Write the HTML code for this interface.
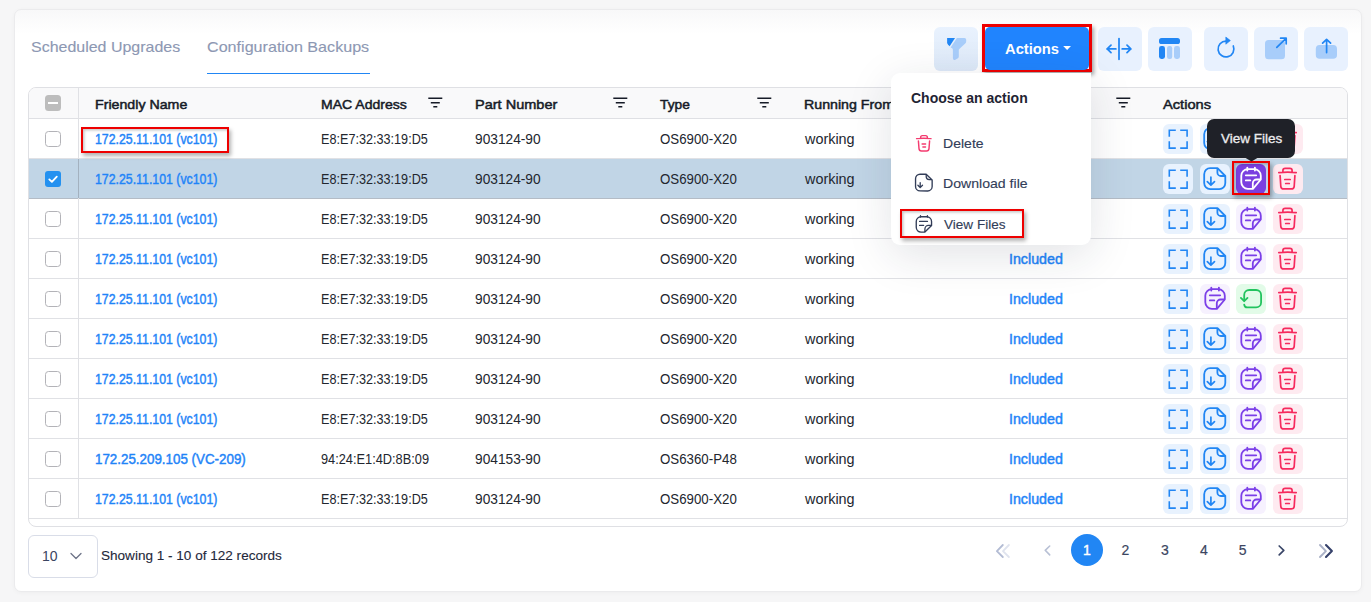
<!DOCTYPE html>
<html><head><meta charset="utf-8"><style>
html,body{margin:0;padding:0;}
body{width:1371px;height:602px;overflow:hidden;background:#f6f6f7;position:relative;font-family:"Liberation Sans", sans-serif;}
.t{position:absolute;white-space:nowrap;}
.b{position:absolute;}
svg.b{overflow:visible;}
</style></head><body>
<div class="b" style="left:14.0px;top:9.0px;width:1348.0px;height:583.0px;background:linear-gradient(#f8f8f9,#fff 24px);border:1px solid #ebebed;border-radius:7px;box-sizing:border-box;box-shadow:0 1px 4px rgba(0,0,0,.035)"></div>
<div class="t" style="left:31.2px;top:39.30px;font-size:15px;line-height:15px;font-weight:400;color:#8d98b3;letter-spacing:0px;transform:scaleX(1.0649);transform-origin:0 0;-webkit-text-stroke:0.12px #8d98b3;">Scheduled Upgrades</div>
<div class="t" style="left:207.2px;top:39.30px;font-size:15px;line-height:15px;font-weight:400;color:#8d98b3;letter-spacing:0px;transform:scaleX(1.0746);transform-origin:0 0;-webkit-text-stroke:0.12px #8d98b3;">Configuration Backups</div>
<div class="b" style="left:207.0px;top:72.6px;width:163.0px;height:1.5px;background:#2186f4"></div>
<div class="b" style="left:934.0px;top:27.0px;width:44.0px;height:44.0px;background:#e8f1fe;border-radius:6px;background:linear-gradient(#e9f2fe,#dde9f8)"></div>
<svg class="b" style="left:934.0px;top:27.0px" width="44" height="44" viewBox="0 0 44 44" fill="none"><path d="M13.1 11H21L15.6 19.3L13.9 17.4Q13.1 16.5 13.1 15.4Z" fill="#2186f4"/><path d="M22.9 11H30.5Q32.2 11 32.2 12.8V14.3Q32.2 15.6 31.2 16.6L24.8 22.6V29.6Q24.8 30.6 23.9 31.2L21.8 32.5Q18.9 34 18.9 31V22.8Q18.9 22 18.2 21.3L16.6 20.4Z" fill="#a8cdfa"/></svg>
<div class="b" style="left:982.0px;top:24.0px;width:110.0px;height:48.0px;border:3px solid #ee0000;box-sizing:border-box;box-shadow:2px 3px 4px rgba(0,0,0,.35)"></div>
<div class="b" style="left:985.0px;top:27.0px;width:104.0px;height:43.0px;background:#2084fe;border-radius:5px"></div>
<div class="t" style="left:1005.4px;top:41.30px;font-size:15px;line-height:15px;font-weight:700;color:#fff;letter-spacing:0px;transform:scaleX(0.9815);transform-origin:0 0;">Actions</div>
<svg class="b" style="left:1062.0px;top:44.0px" width="12" height="8" viewBox="0 0 12 8" fill="none"><path d="M1.2 2H9L5.1 6Z" fill="#fff"/></svg>
<div class="b" style="left:1098.0px;top:27.0px;width:44.0px;height:44.0px;background:#e8f1fe;border-radius:6px;"></div>
<svg class="b" style="left:1098.0px;top:27.0px" width="44" height="44" viewBox="0 0 44 44" fill="none"><path d="M21 11.5V32.3M9 21.9H17.9M24.2 21.9H32.9M13 18.2L9.2 21.9L13 25.6M29 18.2L32.8 21.9L29 25.6" stroke="#2186f4" stroke-width="1.75" stroke-linecap="round" stroke-linejoin="round"/></svg>
<div class="b" style="left:1148.0px;top:27.0px;width:44.0px;height:44.0px;background:#e8f1fe;border-radius:6px;"></div>
<svg class="b" style="left:1148.0px;top:27.0px" width="44" height="44" viewBox="0 0 44 44" fill="none"><rect x="11" y="11" width="21" height="6" rx="2.6" fill="#2186f4"/><rect x="11" y="19" width="6" height="13" rx="2.4" fill="#2186f4"/><rect x="19" y="19" width="5.2" height="13" rx="2.2" fill="#a8cdfa"/><rect x="26" y="19" width="6" height="13" rx="2.4" fill="#a8cdfa"/></svg>
<div class="b" style="left:1204.0px;top:27.0px;width:44.0px;height:44.0px;background:#e8f1fe;border-radius:6px;"></div>
<svg class="b" style="left:1204.0px;top:27.0px" width="44" height="44" viewBox="0 0 44 44" fill="none"><path d="M22 14.1A7.9 7.9 0 1 0 29.3 19" stroke="#2186f4" stroke-width="1.7" stroke-linecap="round"/><path d="M21.8 10L26.4 13.6L21.8 17.2Z" fill="#2186f4" stroke="#2186f4" stroke-width=".6" stroke-linejoin="round"/></svg>
<div class="b" style="left:1254.0px;top:27.0px;width:44.0px;height:44.0px;background:#e8f1fe;border-radius:6px;"></div>
<svg class="b" style="left:1254.0px;top:27.0px" width="44" height="44" viewBox="0 0 44 44" fill="none"><rect x="11" y="13" width="20" height="19.3" rx="3.5" fill="#a8cdfa"/><path d="M22.8 20.4L32 11.3M26.6 11.2H32.2V16.8" stroke="#2186f4" stroke-width="1.7" stroke-linecap="round" stroke-linejoin="round"/></svg>
<div class="b" style="left:1304.0px;top:27.0px;width:44.0px;height:44.0px;background:#e8f1fe;border-radius:6px;"></div>
<svg class="b" style="left:1304.0px;top:27.0px" width="44" height="44" viewBox="0 0 44 44" fill="none"><rect x="11.8" y="18" width="21.2" height="13.8" rx="3.8" fill="#a8cdfa"/><path d="M22.6 12.6V25.6M18.6 16.2L22.6 12.3L26.6 16.2" stroke="#2186f4" stroke-width="1.7" stroke-linecap="round" stroke-linejoin="round"/></svg>
<div class="b" style="left:28.0px;top:87.0px;width:1320.0px;height:440.0px;border:1px solid #dfe0e4;border-radius:8px;box-sizing:border-box"></div>
<div class="b" style="left:29.0px;top:88.0px;width:1318.0px;height:30.0px;background:#f9f9fa;border-radius:7px 7px 0 0"></div>
<div class="b" style="left:29.0px;top:118.0px;width:1318.0px;height:1.0px;background:#dfe0e4"></div>
<div class="b" style="left:29.0px;top:158.0px;width:1318.0px;height:1.0px;background:#e0e1e5"></div>
<div class="b" style="left:29.0px;top:159.0px;width:1318.0px;height:39.0px;background:#c1d5e6"></div>
<div class="b" style="left:29.0px;top:198.0px;width:1318.0px;height:1.0px;background:#b4bcc6"></div>
<div class="b" style="left:29.0px;top:238.0px;width:1318.0px;height:1.0px;background:#e0e1e5"></div>
<div class="b" style="left:29.0px;top:278.0px;width:1318.0px;height:1.0px;background:#e0e1e5"></div>
<div class="b" style="left:29.0px;top:318.0px;width:1318.0px;height:1.0px;background:#e0e1e5"></div>
<div class="b" style="left:29.0px;top:358.0px;width:1318.0px;height:1.0px;background:#e0e1e5"></div>
<div class="b" style="left:29.0px;top:398.0px;width:1318.0px;height:1.0px;background:#e0e1e5"></div>
<div class="b" style="left:29.0px;top:438.0px;width:1318.0px;height:1.0px;background:#e0e1e5"></div>
<div class="b" style="left:29.0px;top:478.0px;width:1318.0px;height:1.0px;background:#e0e1e5"></div>
<div class="b" style="left:29.0px;top:518.0px;width:1318.0px;height:1.0px;background:#e0e1e5"></div>
<div class="b" style="left:78.0px;top:88.0px;width:1.0px;height:430.0px;background:#e0e1e5"></div>
<div class="b" style="left:78.0px;top:159.0px;width:1.0px;height:39.0px;background:#a3b1bf"></div>
<div class="t" style="left:94.8px;top:97.57px;font-size:13.5px;line-height:13.5px;font-weight:400;color:#161b27;letter-spacing:0px;transform:scaleX(1.0515);transform-origin:0 0;-webkit-text-stroke:0.5px #161b27;">Friendly Name</div>
<div class="t" style="left:320.8px;top:97.57px;font-size:13.5px;line-height:13.5px;font-weight:400;color:#161b27;letter-spacing:0px;transform:scaleX(1.0396);transform-origin:0 0;-webkit-text-stroke:0.5px #161b27;">MAC Address</div>
<div class="t" style="left:474.6px;top:97.57px;font-size:13.5px;line-height:13.5px;font-weight:400;color:#161b27;letter-spacing:0px;transform:scaleX(1.0754);transform-origin:0 0;-webkit-text-stroke:0.5px #161b27;">Part Number</div>
<div class="t" style="left:660.2px;top:97.57px;font-size:13.5px;line-height:13.5px;font-weight:400;color:#161b27;letter-spacing:0px;transform:scaleX(1.0177);transform-origin:0 0;-webkit-text-stroke:0.5px #161b27;">Type</div>
<div class="t" style="left:804.3px;top:97.57px;font-size:13.5px;line-height:13.5px;font-weight:400;color:#161b27;letter-spacing:0px;transform:scaleX(1.0521);transform-origin:0 0;-webkit-text-stroke:0.5px #161b27;">Running From</div>
<div class="t" style="left:1162.9px;top:97.57px;font-size:13.5px;line-height:13.5px;font-weight:400;color:#161b27;letter-spacing:0px;transform:scaleX(1.0840);transform-origin:0 0;-webkit-text-stroke:0.5px #161b27;">Actions</div>
<svg class="b" style="left:428.0px;top:96.0px" width="15" height="12" viewBox="0 0 15 12" fill="none"><path d="M0.3 2.3H14.3M2.8 6.7H11.8M5.3 10.7H9.3" stroke="#161b27" stroke-width="1.55"/></svg>
<svg class="b" style="left:613.0px;top:96.0px" width="15" height="12" viewBox="0 0 15 12" fill="none"><path d="M0.3 2.3H14.3M2.8 6.7H11.8M5.3 10.7H9.3" stroke="#161b27" stroke-width="1.55"/></svg>
<svg class="b" style="left:757.0px;top:96.0px" width="15" height="12" viewBox="0 0 15 12" fill="none"><path d="M0.3 2.3H14.3M2.8 6.7H11.8M5.3 10.7H9.3" stroke="#161b27" stroke-width="1.55"/></svg>
<svg class="b" style="left:1116.0px;top:96.0px" width="15" height="12" viewBox="0 0 15 12" fill="none"><path d="M0.3 2.3H14.3M2.8 6.7H11.8M5.3 10.7H9.3" stroke="#161b27" stroke-width="1.55"/></svg>
<div class="b" style="left:45.0px;top:95.0px;width:16.0px;height:16.0px;background:#bdbdbd;border-radius:3.5px"></div>
<div class="b" style="left:48.0px;top:102.0px;width:10.0px;height:2.0px;background:#fff"></div>
<div class="b" style="left:45.0px;top:131.0px;width:16.0px;height:16.0px;border:1px solid #b3b3b8;border-radius:3.5px;box-sizing:border-box;background:#fff"></div>
<div class="t" style="left:95.3px;top:132.15px;font-size:14px;line-height:14px;font-weight:400;color:#1f84f8;letter-spacing:0px;transform:scaleX(0.8801);transform-origin:0 0;-webkit-text-stroke:0.45px #1f84f8;">172.25.11.101 (vc101)</div>
<div class="t" style="left:321.4px;top:132.15px;font-size:14px;line-height:14px;font-weight:400;color:#22262e;letter-spacing:0px;transform:scaleX(0.9027);transform-origin:0 0;">E8:E7:32:33:19:D5</div>
<div class="t" style="left:475.2px;top:132.15px;font-size:14px;line-height:14px;font-weight:400;color:#22262e;letter-spacing:0px;transform:scaleX(0.9798);transform-origin:0 0;">903124-90</div>
<div class="t" style="left:659.5px;top:132.15px;font-size:14px;line-height:14px;font-weight:400;color:#22262e;letter-spacing:0px;transform:scaleX(0.9487);transform-origin:0 0;">OS6900-X20</div>
<div class="t" style="left:804.6px;top:132.15px;font-size:14px;line-height:14px;font-weight:400;color:#22262e;letter-spacing:0px;transform:scaleX(1.0280);transform-origin:0 0;">working</div>
<div class="t" style="left:1009.1px;top:132.15px;font-size:14px;line-height:14px;font-weight:400;color:#1f84f8;letter-spacing:0px;transform:scaleX(1.0163);transform-origin:0 0;-webkit-text-stroke:0.45px #1f84f8;">Included</div>
<div class="b" style="left:1163.2px;top:124.0px;width:30.0px;height:30.0px;background:#e8f2fe;border-radius:6px"></div>
<svg class="b" style="left:1163.2px;top:124.0px" width="30" height="30" viewBox="0 0 30 30" fill="none"><path d="M6.3 12V6.3H12M18 6.3H24.1V12M24.1 18V24.1H18M12 24.1H6.3V18" stroke="#2186f4" stroke-width="1.6" stroke-linecap="square"/></svg>
<div class="b" style="left:1199.9px;top:124.0px;width:30.0px;height:30.0px;background:#e8f2fe;border-radius:6px"></div>
<svg class="b" style="left:1199.9px;top:124.0px" width="30" height="30" viewBox="0 0 30 30" fill="none"><path d="M17.5 4.2H10.2A6 6 0 0 0 4.2 10.2V19.1A6 6 0 0 0 10.2 25.1H19.3A6 6 0 0 0 25.3 19.1V12Z" stroke="#2186f4" stroke-width="1.8" stroke-linejoin="round"/><path d="M17.4 4.5V8.5A3.5 3.5 0 0 0 20.9 12H25" stroke="#2186f4" stroke-width="1.8"/><path d="M10.9 13.2V20.8M7.3 17.6L10.9 21.1L14.5 17.6" stroke="#2186f4" stroke-width="1.7" stroke-linecap="round" stroke-linejoin="round"/></svg>
<div class="b" style="left:1236.1px;top:124.0px;width:30.0px;height:30.0px;background:#f6f1fe;border-radius:6px"></div>
<svg class="b" style="left:1236.1px;top:124.0px" width="30" height="30" viewBox="0 0 30 30" fill="none"><path d="M16.9 24.8H11.9A6.6 6.6 0 0 1 5.3 18.2V11.7A6.6 6.6 0 0 1 11.9 5.1H18.2A6.6 6.6 0 0 1 24.8 11.7V15.5Z" stroke="#7b3fe8" stroke-width="1.8" stroke-linejoin="round"/><path d="M24.6 15.5H20.6A3.8 3.8 0 0 0 16.8 19.3V24.6" stroke="#7b3fe8" stroke-width="1.8"/><path d="M11.3 3.6V6.6M18.9 3.6V6.6M9.8 11.3H20.2M9.8 16.4H14.3" stroke="#7b3fe8" stroke-width="1.8" stroke-linecap="round"/></svg>
<div class="b" style="left:1273.1px;top:124.0px;width:30.0px;height:30.0px;background:#feeaf0;border-radius:6px"></div>
<svg class="b" style="left:1273.1px;top:124.0px" width="30" height="30" viewBox="0 0 30 30" fill="none"><path d="M5.8 8.6Q15 7.6 23.2 8.6M9.9 8.2V6.6Q9.9 4.3 12.2 4.3H16.9Q19.1 4.3 19.1 6.6V8.2M7.1 11.6L7.8 22.3Q8.1 24.9 10.6 24.9H18.4Q20.9 24.9 21.2 22.3L21.9 11.6M11.8 15.5H17.2M12.7 19.5H16.3" stroke="#f62a5e" stroke-width="1.7" stroke-linecap="round" stroke-linejoin="round"/></svg>
<div class="b" style="left:45.0px;top:171.0px;width:16.0px;height:16.0px;background:#2491f0;border-radius:3px"></div>
<svg class="b" style="left:45.0px;top:171.0px" width="16" height="16" viewBox="0 0 16 16" fill="none"><path d="M4.3 8.4L6.9 10.9L11.8 5.6" stroke="#fff" stroke-width="1.8" stroke-linecap="round" stroke-linejoin="round"/></svg>
<div class="t" style="left:95.3px;top:172.15px;font-size:14px;line-height:14px;font-weight:400;color:#1f84f8;letter-spacing:0px;transform:scaleX(0.8801);transform-origin:0 0;-webkit-text-stroke:0.45px #1f84f8;">172.25.11.101 (vc101)</div>
<div class="t" style="left:321.4px;top:172.15px;font-size:14px;line-height:14px;font-weight:400;color:#22262e;letter-spacing:0px;transform:scaleX(0.9027);transform-origin:0 0;">E8:E7:32:33:19:D5</div>
<div class="t" style="left:475.2px;top:172.15px;font-size:14px;line-height:14px;font-weight:400;color:#22262e;letter-spacing:0px;transform:scaleX(0.9798);transform-origin:0 0;">903124-90</div>
<div class="t" style="left:659.5px;top:172.15px;font-size:14px;line-height:14px;font-weight:400;color:#22262e;letter-spacing:0px;transform:scaleX(0.9487);transform-origin:0 0;">OS6900-X20</div>
<div class="t" style="left:804.6px;top:172.15px;font-size:14px;line-height:14px;font-weight:400;color:#22262e;letter-spacing:0px;transform:scaleX(1.0280);transform-origin:0 0;">working</div>
<div class="t" style="left:1009.1px;top:172.15px;font-size:14px;line-height:14px;font-weight:400;color:#1f84f8;letter-spacing:0px;transform:scaleX(1.0163);transform-origin:0 0;-webkit-text-stroke:0.45px #1f84f8;">Included</div>
<div class="b" style="left:1163.2px;top:164.0px;width:30.0px;height:30.0px;background:#e8f2fe;border-radius:6px"></div>
<svg class="b" style="left:1163.2px;top:164.0px" width="30" height="30" viewBox="0 0 30 30" fill="none"><path d="M6.3 12V6.3H12M18 6.3H24.1V12M24.1 18V24.1H18M12 24.1H6.3V18" stroke="#2186f4" stroke-width="1.6" stroke-linecap="square"/></svg>
<div class="b" style="left:1199.9px;top:164.0px;width:30.0px;height:30.0px;background:#e8f2fe;border-radius:6px"></div>
<svg class="b" style="left:1199.9px;top:164.0px" width="30" height="30" viewBox="0 0 30 30" fill="none"><path d="M17.5 4.2H10.2A6 6 0 0 0 4.2 10.2V19.1A6 6 0 0 0 10.2 25.1H19.3A6 6 0 0 0 25.3 19.1V12Z" stroke="#2186f4" stroke-width="1.8" stroke-linejoin="round"/><path d="M17.4 4.5V8.5A3.5 3.5 0 0 0 20.9 12H25" stroke="#2186f4" stroke-width="1.8"/><path d="M10.9 13.2V20.8M7.3 17.6L10.9 21.1L14.5 17.6" stroke="#2186f4" stroke-width="1.7" stroke-linecap="round" stroke-linejoin="round"/></svg>
<div class="b" style="left:1236.1px;top:164.0px;width:30.0px;height:30.0px;background:#7b3fe0;border-radius:6px"></div>
<svg class="b" style="left:1236.1px;top:164.0px" width="30" height="30" viewBox="0 0 30 30" fill="none"><path d="M16.9 24.8H11.9A6.6 6.6 0 0 1 5.3 18.2V11.7A6.6 6.6 0 0 1 11.9 5.1H18.2A6.6 6.6 0 0 1 24.8 11.7V15.5Z" stroke="#fff" stroke-width="1.8" stroke-linejoin="round"/><path d="M24.6 15.5H20.6A3.8 3.8 0 0 0 16.8 19.3V24.6" stroke="#fff" stroke-width="1.8"/><path d="M11.3 3.6V6.6M18.9 3.6V6.6M9.8 11.3H20.2M9.8 16.4H14.3" stroke="#fff" stroke-width="1.8" stroke-linecap="round"/></svg>
<div class="b" style="left:1273.1px;top:164.0px;width:30.0px;height:30.0px;background:#feeaf0;border-radius:6px"></div>
<svg class="b" style="left:1273.1px;top:164.0px" width="30" height="30" viewBox="0 0 30 30" fill="none"><path d="M5.8 8.6Q15 7.6 23.2 8.6M9.9 8.2V6.6Q9.9 4.3 12.2 4.3H16.9Q19.1 4.3 19.1 6.6V8.2M7.1 11.6L7.8 22.3Q8.1 24.9 10.6 24.9H18.4Q20.9 24.9 21.2 22.3L21.9 11.6M11.8 15.5H17.2M12.7 19.5H16.3" stroke="#f62a5e" stroke-width="1.7" stroke-linecap="round" stroke-linejoin="round"/></svg>
<div class="b" style="left:45.0px;top:211.0px;width:16.0px;height:16.0px;border:1px solid #b3b3b8;border-radius:3.5px;box-sizing:border-box;background:#fff"></div>
<div class="t" style="left:95.3px;top:212.15px;font-size:14px;line-height:14px;font-weight:400;color:#1f84f8;letter-spacing:0px;transform:scaleX(0.8801);transform-origin:0 0;-webkit-text-stroke:0.45px #1f84f8;">172.25.11.101 (vc101)</div>
<div class="t" style="left:321.4px;top:212.15px;font-size:14px;line-height:14px;font-weight:400;color:#22262e;letter-spacing:0px;transform:scaleX(0.9027);transform-origin:0 0;">E8:E7:32:33:19:D5</div>
<div class="t" style="left:475.2px;top:212.15px;font-size:14px;line-height:14px;font-weight:400;color:#22262e;letter-spacing:0px;transform:scaleX(0.9798);transform-origin:0 0;">903124-90</div>
<div class="t" style="left:659.5px;top:212.15px;font-size:14px;line-height:14px;font-weight:400;color:#22262e;letter-spacing:0px;transform:scaleX(0.9487);transform-origin:0 0;">OS6900-X20</div>
<div class="t" style="left:804.6px;top:212.15px;font-size:14px;line-height:14px;font-weight:400;color:#22262e;letter-spacing:0px;transform:scaleX(1.0280);transform-origin:0 0;">working</div>
<div class="t" style="left:1009.1px;top:212.15px;font-size:14px;line-height:14px;font-weight:400;color:#1f84f8;letter-spacing:0px;transform:scaleX(1.0163);transform-origin:0 0;-webkit-text-stroke:0.45px #1f84f8;">Included</div>
<div class="b" style="left:1163.2px;top:204.0px;width:30.0px;height:30.0px;background:#e8f2fe;border-radius:6px"></div>
<svg class="b" style="left:1163.2px;top:204.0px" width="30" height="30" viewBox="0 0 30 30" fill="none"><path d="M6.3 12V6.3H12M18 6.3H24.1V12M24.1 18V24.1H18M12 24.1H6.3V18" stroke="#2186f4" stroke-width="1.6" stroke-linecap="square"/></svg>
<div class="b" style="left:1199.9px;top:204.0px;width:30.0px;height:30.0px;background:#e8f2fe;border-radius:6px"></div>
<svg class="b" style="left:1199.9px;top:204.0px" width="30" height="30" viewBox="0 0 30 30" fill="none"><path d="M17.5 4.2H10.2A6 6 0 0 0 4.2 10.2V19.1A6 6 0 0 0 10.2 25.1H19.3A6 6 0 0 0 25.3 19.1V12Z" stroke="#2186f4" stroke-width="1.8" stroke-linejoin="round"/><path d="M17.4 4.5V8.5A3.5 3.5 0 0 0 20.9 12H25" stroke="#2186f4" stroke-width="1.8"/><path d="M10.9 13.2V20.8M7.3 17.6L10.9 21.1L14.5 17.6" stroke="#2186f4" stroke-width="1.7" stroke-linecap="round" stroke-linejoin="round"/></svg>
<div class="b" style="left:1236.1px;top:204.0px;width:30.0px;height:30.0px;background:#f6f1fe;border-radius:6px"></div>
<svg class="b" style="left:1236.1px;top:204.0px" width="30" height="30" viewBox="0 0 30 30" fill="none"><path d="M16.9 24.8H11.9A6.6 6.6 0 0 1 5.3 18.2V11.7A6.6 6.6 0 0 1 11.9 5.1H18.2A6.6 6.6 0 0 1 24.8 11.7V15.5Z" stroke="#7b3fe8" stroke-width="1.8" stroke-linejoin="round"/><path d="M24.6 15.5H20.6A3.8 3.8 0 0 0 16.8 19.3V24.6" stroke="#7b3fe8" stroke-width="1.8"/><path d="M11.3 3.6V6.6M18.9 3.6V6.6M9.8 11.3H20.2M9.8 16.4H14.3" stroke="#7b3fe8" stroke-width="1.8" stroke-linecap="round"/></svg>
<div class="b" style="left:1273.1px;top:204.0px;width:30.0px;height:30.0px;background:#feeaf0;border-radius:6px"></div>
<svg class="b" style="left:1273.1px;top:204.0px" width="30" height="30" viewBox="0 0 30 30" fill="none"><path d="M5.8 8.6Q15 7.6 23.2 8.6M9.9 8.2V6.6Q9.9 4.3 12.2 4.3H16.9Q19.1 4.3 19.1 6.6V8.2M7.1 11.6L7.8 22.3Q8.1 24.9 10.6 24.9H18.4Q20.9 24.9 21.2 22.3L21.9 11.6M11.8 15.5H17.2M12.7 19.5H16.3" stroke="#f62a5e" stroke-width="1.7" stroke-linecap="round" stroke-linejoin="round"/></svg>
<div class="b" style="left:45.0px;top:251.0px;width:16.0px;height:16.0px;border:1px solid #b3b3b8;border-radius:3.5px;box-sizing:border-box;background:#fff"></div>
<div class="t" style="left:95.3px;top:252.15px;font-size:14px;line-height:14px;font-weight:400;color:#1f84f8;letter-spacing:0px;transform:scaleX(0.8801);transform-origin:0 0;-webkit-text-stroke:0.45px #1f84f8;">172.25.11.101 (vc101)</div>
<div class="t" style="left:321.4px;top:252.15px;font-size:14px;line-height:14px;font-weight:400;color:#22262e;letter-spacing:0px;transform:scaleX(0.9027);transform-origin:0 0;">E8:E7:32:33:19:D5</div>
<div class="t" style="left:475.2px;top:252.15px;font-size:14px;line-height:14px;font-weight:400;color:#22262e;letter-spacing:0px;transform:scaleX(0.9798);transform-origin:0 0;">903124-90</div>
<div class="t" style="left:659.5px;top:252.15px;font-size:14px;line-height:14px;font-weight:400;color:#22262e;letter-spacing:0px;transform:scaleX(0.9487);transform-origin:0 0;">OS6900-X20</div>
<div class="t" style="left:804.6px;top:252.15px;font-size:14px;line-height:14px;font-weight:400;color:#22262e;letter-spacing:0px;transform:scaleX(1.0280);transform-origin:0 0;">working</div>
<div class="t" style="left:1009.1px;top:252.15px;font-size:14px;line-height:14px;font-weight:400;color:#1f84f8;letter-spacing:0px;transform:scaleX(1.0163);transform-origin:0 0;-webkit-text-stroke:0.45px #1f84f8;">Included</div>
<div class="b" style="left:1163.2px;top:244.0px;width:30.0px;height:30.0px;background:#e8f2fe;border-radius:6px"></div>
<svg class="b" style="left:1163.2px;top:244.0px" width="30" height="30" viewBox="0 0 30 30" fill="none"><path d="M6.3 12V6.3H12M18 6.3H24.1V12M24.1 18V24.1H18M12 24.1H6.3V18" stroke="#2186f4" stroke-width="1.6" stroke-linecap="square"/></svg>
<div class="b" style="left:1199.9px;top:244.0px;width:30.0px;height:30.0px;background:#e8f2fe;border-radius:6px"></div>
<svg class="b" style="left:1199.9px;top:244.0px" width="30" height="30" viewBox="0 0 30 30" fill="none"><path d="M17.5 4.2H10.2A6 6 0 0 0 4.2 10.2V19.1A6 6 0 0 0 10.2 25.1H19.3A6 6 0 0 0 25.3 19.1V12Z" stroke="#2186f4" stroke-width="1.8" stroke-linejoin="round"/><path d="M17.4 4.5V8.5A3.5 3.5 0 0 0 20.9 12H25" stroke="#2186f4" stroke-width="1.8"/><path d="M10.9 13.2V20.8M7.3 17.6L10.9 21.1L14.5 17.6" stroke="#2186f4" stroke-width="1.7" stroke-linecap="round" stroke-linejoin="round"/></svg>
<div class="b" style="left:1236.1px;top:244.0px;width:30.0px;height:30.0px;background:#f6f1fe;border-radius:6px"></div>
<svg class="b" style="left:1236.1px;top:244.0px" width="30" height="30" viewBox="0 0 30 30" fill="none"><path d="M16.9 24.8H11.9A6.6 6.6 0 0 1 5.3 18.2V11.7A6.6 6.6 0 0 1 11.9 5.1H18.2A6.6 6.6 0 0 1 24.8 11.7V15.5Z" stroke="#7b3fe8" stroke-width="1.8" stroke-linejoin="round"/><path d="M24.6 15.5H20.6A3.8 3.8 0 0 0 16.8 19.3V24.6" stroke="#7b3fe8" stroke-width="1.8"/><path d="M11.3 3.6V6.6M18.9 3.6V6.6M9.8 11.3H20.2M9.8 16.4H14.3" stroke="#7b3fe8" stroke-width="1.8" stroke-linecap="round"/></svg>
<div class="b" style="left:1273.1px;top:244.0px;width:30.0px;height:30.0px;background:#feeaf0;border-radius:6px"></div>
<svg class="b" style="left:1273.1px;top:244.0px" width="30" height="30" viewBox="0 0 30 30" fill="none"><path d="M5.8 8.6Q15 7.6 23.2 8.6M9.9 8.2V6.6Q9.9 4.3 12.2 4.3H16.9Q19.1 4.3 19.1 6.6V8.2M7.1 11.6L7.8 22.3Q8.1 24.9 10.6 24.9H18.4Q20.9 24.9 21.2 22.3L21.9 11.6M11.8 15.5H17.2M12.7 19.5H16.3" stroke="#f62a5e" stroke-width="1.7" stroke-linecap="round" stroke-linejoin="round"/></svg>
<div class="b" style="left:45.0px;top:291.0px;width:16.0px;height:16.0px;border:1px solid #b3b3b8;border-radius:3.5px;box-sizing:border-box;background:#fff"></div>
<div class="t" style="left:95.3px;top:292.15px;font-size:14px;line-height:14px;font-weight:400;color:#1f84f8;letter-spacing:0px;transform:scaleX(0.8801);transform-origin:0 0;-webkit-text-stroke:0.45px #1f84f8;">172.25.11.101 (vc101)</div>
<div class="t" style="left:321.4px;top:292.15px;font-size:14px;line-height:14px;font-weight:400;color:#22262e;letter-spacing:0px;transform:scaleX(0.9027);transform-origin:0 0;">E8:E7:32:33:19:D5</div>
<div class="t" style="left:475.2px;top:292.15px;font-size:14px;line-height:14px;font-weight:400;color:#22262e;letter-spacing:0px;transform:scaleX(0.9798);transform-origin:0 0;">903124-90</div>
<div class="t" style="left:659.5px;top:292.15px;font-size:14px;line-height:14px;font-weight:400;color:#22262e;letter-spacing:0px;transform:scaleX(0.9487);transform-origin:0 0;">OS6900-X20</div>
<div class="t" style="left:804.6px;top:292.15px;font-size:14px;line-height:14px;font-weight:400;color:#22262e;letter-spacing:0px;transform:scaleX(1.0280);transform-origin:0 0;">working</div>
<div class="t" style="left:1009.1px;top:292.15px;font-size:14px;line-height:14px;font-weight:400;color:#1f84f8;letter-spacing:0px;transform:scaleX(1.0163);transform-origin:0 0;-webkit-text-stroke:0.45px #1f84f8;">Included</div>
<div class="b" style="left:1163.2px;top:284.0px;width:30.0px;height:30.0px;background:#e8f2fe;border-radius:6px"></div>
<svg class="b" style="left:1163.2px;top:284.0px" width="30" height="30" viewBox="0 0 30 30" fill="none"><path d="M6.3 12V6.3H12M18 6.3H24.1V12M24.1 18V24.1H18M12 24.1H6.3V18" stroke="#2186f4" stroke-width="1.6" stroke-linecap="square"/></svg>
<div class="b" style="left:1199.9px;top:284.0px;width:30.0px;height:30.0px;background:#f6f1fe;border-radius:6px"></div>
<svg class="b" style="left:1199.9px;top:284.0px" width="30" height="30" viewBox="0 0 30 30" fill="none"><path d="M16.9 24.8H11.9A6.6 6.6 0 0 1 5.3 18.2V11.7A6.6 6.6 0 0 1 11.9 5.1H18.2A6.6 6.6 0 0 1 24.8 11.7V15.5Z" stroke="#7b3fe8" stroke-width="1.8" stroke-linejoin="round"/><path d="M24.6 15.5H20.6A3.8 3.8 0 0 0 16.8 19.3V24.6" stroke="#7b3fe8" stroke-width="1.8"/><path d="M11.3 3.6V6.6M18.9 3.6V6.6M9.8 11.3H20.2M9.8 16.4H14.3" stroke="#7b3fe8" stroke-width="1.8" stroke-linecap="round"/></svg>
<div class="b" style="left:1236.1px;top:284.0px;width:30.0px;height:30.0px;background:#e2fbe8;border-radius:6px"></div>
<svg class="b" style="left:1236.1px;top:284.0px" width="30" height="30" viewBox="0 0 30 30" fill="none"><path d="M8.2 20.6A3.3 3.3 0 0 0 11.9 23.4H20.1A5 5 0 0 0 25.1 18.4V11A5 5 0 0 0 20.1 6H13.2A5 5 0 0 0 8.2 11V16.6" stroke="#22c35e" stroke-width="1.8" stroke-linecap="round"/><path d="M4.9 13.9L8.2 17.2L11.5 13.9" stroke="#22c35e" stroke-width="1.8" stroke-linecap="round" stroke-linejoin="round"/></svg>
<div class="b" style="left:1273.1px;top:284.0px;width:30.0px;height:30.0px;background:#feeaf0;border-radius:6px"></div>
<svg class="b" style="left:1273.1px;top:284.0px" width="30" height="30" viewBox="0 0 30 30" fill="none"><path d="M5.8 8.6Q15 7.6 23.2 8.6M9.9 8.2V6.6Q9.9 4.3 12.2 4.3H16.9Q19.1 4.3 19.1 6.6V8.2M7.1 11.6L7.8 22.3Q8.1 24.9 10.6 24.9H18.4Q20.9 24.9 21.2 22.3L21.9 11.6M11.8 15.5H17.2M12.7 19.5H16.3" stroke="#f62a5e" stroke-width="1.7" stroke-linecap="round" stroke-linejoin="round"/></svg>
<div class="b" style="left:45.0px;top:331.0px;width:16.0px;height:16.0px;border:1px solid #b3b3b8;border-radius:3.5px;box-sizing:border-box;background:#fff"></div>
<div class="t" style="left:95.3px;top:332.15px;font-size:14px;line-height:14px;font-weight:400;color:#1f84f8;letter-spacing:0px;transform:scaleX(0.8801);transform-origin:0 0;-webkit-text-stroke:0.45px #1f84f8;">172.25.11.101 (vc101)</div>
<div class="t" style="left:321.4px;top:332.15px;font-size:14px;line-height:14px;font-weight:400;color:#22262e;letter-spacing:0px;transform:scaleX(0.9027);transform-origin:0 0;">E8:E7:32:33:19:D5</div>
<div class="t" style="left:475.2px;top:332.15px;font-size:14px;line-height:14px;font-weight:400;color:#22262e;letter-spacing:0px;transform:scaleX(0.9798);transform-origin:0 0;">903124-90</div>
<div class="t" style="left:659.5px;top:332.15px;font-size:14px;line-height:14px;font-weight:400;color:#22262e;letter-spacing:0px;transform:scaleX(0.9487);transform-origin:0 0;">OS6900-X20</div>
<div class="t" style="left:804.6px;top:332.15px;font-size:14px;line-height:14px;font-weight:400;color:#22262e;letter-spacing:0px;transform:scaleX(1.0280);transform-origin:0 0;">working</div>
<div class="t" style="left:1009.1px;top:332.15px;font-size:14px;line-height:14px;font-weight:400;color:#1f84f8;letter-spacing:0px;transform:scaleX(1.0163);transform-origin:0 0;-webkit-text-stroke:0.45px #1f84f8;">Included</div>
<div class="b" style="left:1163.2px;top:324.0px;width:30.0px;height:30.0px;background:#e8f2fe;border-radius:6px"></div>
<svg class="b" style="left:1163.2px;top:324.0px" width="30" height="30" viewBox="0 0 30 30" fill="none"><path d="M6.3 12V6.3H12M18 6.3H24.1V12M24.1 18V24.1H18M12 24.1H6.3V18" stroke="#2186f4" stroke-width="1.6" stroke-linecap="square"/></svg>
<div class="b" style="left:1199.9px;top:324.0px;width:30.0px;height:30.0px;background:#e8f2fe;border-radius:6px"></div>
<svg class="b" style="left:1199.9px;top:324.0px" width="30" height="30" viewBox="0 0 30 30" fill="none"><path d="M17.5 4.2H10.2A6 6 0 0 0 4.2 10.2V19.1A6 6 0 0 0 10.2 25.1H19.3A6 6 0 0 0 25.3 19.1V12Z" stroke="#2186f4" stroke-width="1.8" stroke-linejoin="round"/><path d="M17.4 4.5V8.5A3.5 3.5 0 0 0 20.9 12H25" stroke="#2186f4" stroke-width="1.8"/><path d="M10.9 13.2V20.8M7.3 17.6L10.9 21.1L14.5 17.6" stroke="#2186f4" stroke-width="1.7" stroke-linecap="round" stroke-linejoin="round"/></svg>
<div class="b" style="left:1236.1px;top:324.0px;width:30.0px;height:30.0px;background:#f6f1fe;border-radius:6px"></div>
<svg class="b" style="left:1236.1px;top:324.0px" width="30" height="30" viewBox="0 0 30 30" fill="none"><path d="M16.9 24.8H11.9A6.6 6.6 0 0 1 5.3 18.2V11.7A6.6 6.6 0 0 1 11.9 5.1H18.2A6.6 6.6 0 0 1 24.8 11.7V15.5Z" stroke="#7b3fe8" stroke-width="1.8" stroke-linejoin="round"/><path d="M24.6 15.5H20.6A3.8 3.8 0 0 0 16.8 19.3V24.6" stroke="#7b3fe8" stroke-width="1.8"/><path d="M11.3 3.6V6.6M18.9 3.6V6.6M9.8 11.3H20.2M9.8 16.4H14.3" stroke="#7b3fe8" stroke-width="1.8" stroke-linecap="round"/></svg>
<div class="b" style="left:1273.1px;top:324.0px;width:30.0px;height:30.0px;background:#feeaf0;border-radius:6px"></div>
<svg class="b" style="left:1273.1px;top:324.0px" width="30" height="30" viewBox="0 0 30 30" fill="none"><path d="M5.8 8.6Q15 7.6 23.2 8.6M9.9 8.2V6.6Q9.9 4.3 12.2 4.3H16.9Q19.1 4.3 19.1 6.6V8.2M7.1 11.6L7.8 22.3Q8.1 24.9 10.6 24.9H18.4Q20.9 24.9 21.2 22.3L21.9 11.6M11.8 15.5H17.2M12.7 19.5H16.3" stroke="#f62a5e" stroke-width="1.7" stroke-linecap="round" stroke-linejoin="round"/></svg>
<div class="b" style="left:45.0px;top:371.0px;width:16.0px;height:16.0px;border:1px solid #b3b3b8;border-radius:3.5px;box-sizing:border-box;background:#fff"></div>
<div class="t" style="left:95.3px;top:372.15px;font-size:14px;line-height:14px;font-weight:400;color:#1f84f8;letter-spacing:0px;transform:scaleX(0.8801);transform-origin:0 0;-webkit-text-stroke:0.45px #1f84f8;">172.25.11.101 (vc101)</div>
<div class="t" style="left:321.4px;top:372.15px;font-size:14px;line-height:14px;font-weight:400;color:#22262e;letter-spacing:0px;transform:scaleX(0.9027);transform-origin:0 0;">E8:E7:32:33:19:D5</div>
<div class="t" style="left:475.2px;top:372.15px;font-size:14px;line-height:14px;font-weight:400;color:#22262e;letter-spacing:0px;transform:scaleX(0.9798);transform-origin:0 0;">903124-90</div>
<div class="t" style="left:659.5px;top:372.15px;font-size:14px;line-height:14px;font-weight:400;color:#22262e;letter-spacing:0px;transform:scaleX(0.9487);transform-origin:0 0;">OS6900-X20</div>
<div class="t" style="left:804.6px;top:372.15px;font-size:14px;line-height:14px;font-weight:400;color:#22262e;letter-spacing:0px;transform:scaleX(1.0280);transform-origin:0 0;">working</div>
<div class="t" style="left:1009.1px;top:372.15px;font-size:14px;line-height:14px;font-weight:400;color:#1f84f8;letter-spacing:0px;transform:scaleX(1.0163);transform-origin:0 0;-webkit-text-stroke:0.45px #1f84f8;">Included</div>
<div class="b" style="left:1163.2px;top:364.0px;width:30.0px;height:30.0px;background:#e8f2fe;border-radius:6px"></div>
<svg class="b" style="left:1163.2px;top:364.0px" width="30" height="30" viewBox="0 0 30 30" fill="none"><path d="M6.3 12V6.3H12M18 6.3H24.1V12M24.1 18V24.1H18M12 24.1H6.3V18" stroke="#2186f4" stroke-width="1.6" stroke-linecap="square"/></svg>
<div class="b" style="left:1199.9px;top:364.0px;width:30.0px;height:30.0px;background:#e8f2fe;border-radius:6px"></div>
<svg class="b" style="left:1199.9px;top:364.0px" width="30" height="30" viewBox="0 0 30 30" fill="none"><path d="M17.5 4.2H10.2A6 6 0 0 0 4.2 10.2V19.1A6 6 0 0 0 10.2 25.1H19.3A6 6 0 0 0 25.3 19.1V12Z" stroke="#2186f4" stroke-width="1.8" stroke-linejoin="round"/><path d="M17.4 4.5V8.5A3.5 3.5 0 0 0 20.9 12H25" stroke="#2186f4" stroke-width="1.8"/><path d="M10.9 13.2V20.8M7.3 17.6L10.9 21.1L14.5 17.6" stroke="#2186f4" stroke-width="1.7" stroke-linecap="round" stroke-linejoin="round"/></svg>
<div class="b" style="left:1236.1px;top:364.0px;width:30.0px;height:30.0px;background:#f6f1fe;border-radius:6px"></div>
<svg class="b" style="left:1236.1px;top:364.0px" width="30" height="30" viewBox="0 0 30 30" fill="none"><path d="M16.9 24.8H11.9A6.6 6.6 0 0 1 5.3 18.2V11.7A6.6 6.6 0 0 1 11.9 5.1H18.2A6.6 6.6 0 0 1 24.8 11.7V15.5Z" stroke="#7b3fe8" stroke-width="1.8" stroke-linejoin="round"/><path d="M24.6 15.5H20.6A3.8 3.8 0 0 0 16.8 19.3V24.6" stroke="#7b3fe8" stroke-width="1.8"/><path d="M11.3 3.6V6.6M18.9 3.6V6.6M9.8 11.3H20.2M9.8 16.4H14.3" stroke="#7b3fe8" stroke-width="1.8" stroke-linecap="round"/></svg>
<div class="b" style="left:1273.1px;top:364.0px;width:30.0px;height:30.0px;background:#feeaf0;border-radius:6px"></div>
<svg class="b" style="left:1273.1px;top:364.0px" width="30" height="30" viewBox="0 0 30 30" fill="none"><path d="M5.8 8.6Q15 7.6 23.2 8.6M9.9 8.2V6.6Q9.9 4.3 12.2 4.3H16.9Q19.1 4.3 19.1 6.6V8.2M7.1 11.6L7.8 22.3Q8.1 24.9 10.6 24.9H18.4Q20.9 24.9 21.2 22.3L21.9 11.6M11.8 15.5H17.2M12.7 19.5H16.3" stroke="#f62a5e" stroke-width="1.7" stroke-linecap="round" stroke-linejoin="round"/></svg>
<div class="b" style="left:45.0px;top:411.0px;width:16.0px;height:16.0px;border:1px solid #b3b3b8;border-radius:3.5px;box-sizing:border-box;background:#fff"></div>
<div class="t" style="left:95.3px;top:412.15px;font-size:14px;line-height:14px;font-weight:400;color:#1f84f8;letter-spacing:0px;transform:scaleX(0.8801);transform-origin:0 0;-webkit-text-stroke:0.45px #1f84f8;">172.25.11.101 (vc101)</div>
<div class="t" style="left:321.4px;top:412.15px;font-size:14px;line-height:14px;font-weight:400;color:#22262e;letter-spacing:0px;transform:scaleX(0.9027);transform-origin:0 0;">E8:E7:32:33:19:D5</div>
<div class="t" style="left:475.2px;top:412.15px;font-size:14px;line-height:14px;font-weight:400;color:#22262e;letter-spacing:0px;transform:scaleX(0.9798);transform-origin:0 0;">903124-90</div>
<div class="t" style="left:659.5px;top:412.15px;font-size:14px;line-height:14px;font-weight:400;color:#22262e;letter-spacing:0px;transform:scaleX(0.9487);transform-origin:0 0;">OS6900-X20</div>
<div class="t" style="left:804.6px;top:412.15px;font-size:14px;line-height:14px;font-weight:400;color:#22262e;letter-spacing:0px;transform:scaleX(1.0280);transform-origin:0 0;">working</div>
<div class="t" style="left:1009.1px;top:412.15px;font-size:14px;line-height:14px;font-weight:400;color:#1f84f8;letter-spacing:0px;transform:scaleX(1.0163);transform-origin:0 0;-webkit-text-stroke:0.45px #1f84f8;">Included</div>
<div class="b" style="left:1163.2px;top:404.0px;width:30.0px;height:30.0px;background:#e8f2fe;border-radius:6px"></div>
<svg class="b" style="left:1163.2px;top:404.0px" width="30" height="30" viewBox="0 0 30 30" fill="none"><path d="M6.3 12V6.3H12M18 6.3H24.1V12M24.1 18V24.1H18M12 24.1H6.3V18" stroke="#2186f4" stroke-width="1.6" stroke-linecap="square"/></svg>
<div class="b" style="left:1199.9px;top:404.0px;width:30.0px;height:30.0px;background:#e8f2fe;border-radius:6px"></div>
<svg class="b" style="left:1199.9px;top:404.0px" width="30" height="30" viewBox="0 0 30 30" fill="none"><path d="M17.5 4.2H10.2A6 6 0 0 0 4.2 10.2V19.1A6 6 0 0 0 10.2 25.1H19.3A6 6 0 0 0 25.3 19.1V12Z" stroke="#2186f4" stroke-width="1.8" stroke-linejoin="round"/><path d="M17.4 4.5V8.5A3.5 3.5 0 0 0 20.9 12H25" stroke="#2186f4" stroke-width="1.8"/><path d="M10.9 13.2V20.8M7.3 17.6L10.9 21.1L14.5 17.6" stroke="#2186f4" stroke-width="1.7" stroke-linecap="round" stroke-linejoin="round"/></svg>
<div class="b" style="left:1236.1px;top:404.0px;width:30.0px;height:30.0px;background:#f6f1fe;border-radius:6px"></div>
<svg class="b" style="left:1236.1px;top:404.0px" width="30" height="30" viewBox="0 0 30 30" fill="none"><path d="M16.9 24.8H11.9A6.6 6.6 0 0 1 5.3 18.2V11.7A6.6 6.6 0 0 1 11.9 5.1H18.2A6.6 6.6 0 0 1 24.8 11.7V15.5Z" stroke="#7b3fe8" stroke-width="1.8" stroke-linejoin="round"/><path d="M24.6 15.5H20.6A3.8 3.8 0 0 0 16.8 19.3V24.6" stroke="#7b3fe8" stroke-width="1.8"/><path d="M11.3 3.6V6.6M18.9 3.6V6.6M9.8 11.3H20.2M9.8 16.4H14.3" stroke="#7b3fe8" stroke-width="1.8" stroke-linecap="round"/></svg>
<div class="b" style="left:1273.1px;top:404.0px;width:30.0px;height:30.0px;background:#feeaf0;border-radius:6px"></div>
<svg class="b" style="left:1273.1px;top:404.0px" width="30" height="30" viewBox="0 0 30 30" fill="none"><path d="M5.8 8.6Q15 7.6 23.2 8.6M9.9 8.2V6.6Q9.9 4.3 12.2 4.3H16.9Q19.1 4.3 19.1 6.6V8.2M7.1 11.6L7.8 22.3Q8.1 24.9 10.6 24.9H18.4Q20.9 24.9 21.2 22.3L21.9 11.6M11.8 15.5H17.2M12.7 19.5H16.3" stroke="#f62a5e" stroke-width="1.7" stroke-linecap="round" stroke-linejoin="round"/></svg>
<div class="b" style="left:45.0px;top:451.0px;width:16.0px;height:16.0px;border:1px solid #b3b3b8;border-radius:3.5px;box-sizing:border-box;background:#fff"></div>
<div class="t" style="left:95.3px;top:452.15px;font-size:14px;line-height:14px;font-weight:400;color:#1f84f8;letter-spacing:0px;transform:scaleX(0.9544);transform-origin:0 0;-webkit-text-stroke:0.45px #1f84f8;">172.25.209.105 (VC-209)</div>
<div class="t" style="left:321.4px;top:452.15px;font-size:14px;line-height:14px;font-weight:400;color:#22262e;letter-spacing:0px;transform:scaleX(0.9128);transform-origin:0 0;">94:24:E1:4D:8B:09</div>
<div class="t" style="left:475.2px;top:452.15px;font-size:14px;line-height:14px;font-weight:400;color:#22262e;letter-spacing:0px;transform:scaleX(0.9798);transform-origin:0 0;">904153-90</div>
<div class="t" style="left:659.5px;top:452.15px;font-size:14px;line-height:14px;font-weight:400;color:#22262e;letter-spacing:0px;transform:scaleX(0.9487);transform-origin:0 0;">OS6360-P48</div>
<div class="t" style="left:804.6px;top:452.15px;font-size:14px;line-height:14px;font-weight:400;color:#22262e;letter-spacing:0px;transform:scaleX(1.0280);transform-origin:0 0;">working</div>
<div class="t" style="left:1009.1px;top:452.15px;font-size:14px;line-height:14px;font-weight:400;color:#1f84f8;letter-spacing:0px;transform:scaleX(1.0163);transform-origin:0 0;-webkit-text-stroke:0.45px #1f84f8;">Included</div>
<div class="b" style="left:1163.2px;top:444.0px;width:30.0px;height:30.0px;background:#e8f2fe;border-radius:6px"></div>
<svg class="b" style="left:1163.2px;top:444.0px" width="30" height="30" viewBox="0 0 30 30" fill="none"><path d="M6.3 12V6.3H12M18 6.3H24.1V12M24.1 18V24.1H18M12 24.1H6.3V18" stroke="#2186f4" stroke-width="1.6" stroke-linecap="square"/></svg>
<div class="b" style="left:1199.9px;top:444.0px;width:30.0px;height:30.0px;background:#e8f2fe;border-radius:6px"></div>
<svg class="b" style="left:1199.9px;top:444.0px" width="30" height="30" viewBox="0 0 30 30" fill="none"><path d="M17.5 4.2H10.2A6 6 0 0 0 4.2 10.2V19.1A6 6 0 0 0 10.2 25.1H19.3A6 6 0 0 0 25.3 19.1V12Z" stroke="#2186f4" stroke-width="1.8" stroke-linejoin="round"/><path d="M17.4 4.5V8.5A3.5 3.5 0 0 0 20.9 12H25" stroke="#2186f4" stroke-width="1.8"/><path d="M10.9 13.2V20.8M7.3 17.6L10.9 21.1L14.5 17.6" stroke="#2186f4" stroke-width="1.7" stroke-linecap="round" stroke-linejoin="round"/></svg>
<div class="b" style="left:1236.1px;top:444.0px;width:30.0px;height:30.0px;background:#f6f1fe;border-radius:6px"></div>
<svg class="b" style="left:1236.1px;top:444.0px" width="30" height="30" viewBox="0 0 30 30" fill="none"><path d="M16.9 24.8H11.9A6.6 6.6 0 0 1 5.3 18.2V11.7A6.6 6.6 0 0 1 11.9 5.1H18.2A6.6 6.6 0 0 1 24.8 11.7V15.5Z" stroke="#7b3fe8" stroke-width="1.8" stroke-linejoin="round"/><path d="M24.6 15.5H20.6A3.8 3.8 0 0 0 16.8 19.3V24.6" stroke="#7b3fe8" stroke-width="1.8"/><path d="M11.3 3.6V6.6M18.9 3.6V6.6M9.8 11.3H20.2M9.8 16.4H14.3" stroke="#7b3fe8" stroke-width="1.8" stroke-linecap="round"/></svg>
<div class="b" style="left:1273.1px;top:444.0px;width:30.0px;height:30.0px;background:#feeaf0;border-radius:6px"></div>
<svg class="b" style="left:1273.1px;top:444.0px" width="30" height="30" viewBox="0 0 30 30" fill="none"><path d="M5.8 8.6Q15 7.6 23.2 8.6M9.9 8.2V6.6Q9.9 4.3 12.2 4.3H16.9Q19.1 4.3 19.1 6.6V8.2M7.1 11.6L7.8 22.3Q8.1 24.9 10.6 24.9H18.4Q20.9 24.9 21.2 22.3L21.9 11.6M11.8 15.5H17.2M12.7 19.5H16.3" stroke="#f62a5e" stroke-width="1.7" stroke-linecap="round" stroke-linejoin="round"/></svg>
<div class="b" style="left:45.0px;top:491.0px;width:16.0px;height:16.0px;border:1px solid #b3b3b8;border-radius:3.5px;box-sizing:border-box;background:#fff"></div>
<div class="t" style="left:95.3px;top:492.15px;font-size:14px;line-height:14px;font-weight:400;color:#1f84f8;letter-spacing:0px;transform:scaleX(0.8801);transform-origin:0 0;-webkit-text-stroke:0.45px #1f84f8;">172.25.11.101 (vc101)</div>
<div class="t" style="left:321.4px;top:492.15px;font-size:14px;line-height:14px;font-weight:400;color:#22262e;letter-spacing:0px;transform:scaleX(0.9027);transform-origin:0 0;">E8:E7:32:33:19:D5</div>
<div class="t" style="left:475.2px;top:492.15px;font-size:14px;line-height:14px;font-weight:400;color:#22262e;letter-spacing:0px;transform:scaleX(0.9798);transform-origin:0 0;">903124-90</div>
<div class="t" style="left:659.5px;top:492.15px;font-size:14px;line-height:14px;font-weight:400;color:#22262e;letter-spacing:0px;transform:scaleX(0.9487);transform-origin:0 0;">OS6900-X20</div>
<div class="t" style="left:804.6px;top:492.15px;font-size:14px;line-height:14px;font-weight:400;color:#22262e;letter-spacing:0px;transform:scaleX(1.0280);transform-origin:0 0;">working</div>
<div class="t" style="left:1009.1px;top:492.15px;font-size:14px;line-height:14px;font-weight:400;color:#1f84f8;letter-spacing:0px;transform:scaleX(1.0163);transform-origin:0 0;-webkit-text-stroke:0.45px #1f84f8;">Included</div>
<div class="b" style="left:1163.2px;top:484.0px;width:30.0px;height:30.0px;background:#e8f2fe;border-radius:6px"></div>
<svg class="b" style="left:1163.2px;top:484.0px" width="30" height="30" viewBox="0 0 30 30" fill="none"><path d="M6.3 12V6.3H12M18 6.3H24.1V12M24.1 18V24.1H18M12 24.1H6.3V18" stroke="#2186f4" stroke-width="1.6" stroke-linecap="square"/></svg>
<div class="b" style="left:1199.9px;top:484.0px;width:30.0px;height:30.0px;background:#e8f2fe;border-radius:6px"></div>
<svg class="b" style="left:1199.9px;top:484.0px" width="30" height="30" viewBox="0 0 30 30" fill="none"><path d="M17.5 4.2H10.2A6 6 0 0 0 4.2 10.2V19.1A6 6 0 0 0 10.2 25.1H19.3A6 6 0 0 0 25.3 19.1V12Z" stroke="#2186f4" stroke-width="1.8" stroke-linejoin="round"/><path d="M17.4 4.5V8.5A3.5 3.5 0 0 0 20.9 12H25" stroke="#2186f4" stroke-width="1.8"/><path d="M10.9 13.2V20.8M7.3 17.6L10.9 21.1L14.5 17.6" stroke="#2186f4" stroke-width="1.7" stroke-linecap="round" stroke-linejoin="round"/></svg>
<div class="b" style="left:1236.1px;top:484.0px;width:30.0px;height:30.0px;background:#f6f1fe;border-radius:6px"></div>
<svg class="b" style="left:1236.1px;top:484.0px" width="30" height="30" viewBox="0 0 30 30" fill="none"><path d="M16.9 24.8H11.9A6.6 6.6 0 0 1 5.3 18.2V11.7A6.6 6.6 0 0 1 11.9 5.1H18.2A6.6 6.6 0 0 1 24.8 11.7V15.5Z" stroke="#7b3fe8" stroke-width="1.8" stroke-linejoin="round"/><path d="M24.6 15.5H20.6A3.8 3.8 0 0 0 16.8 19.3V24.6" stroke="#7b3fe8" stroke-width="1.8"/><path d="M11.3 3.6V6.6M18.9 3.6V6.6M9.8 11.3H20.2M9.8 16.4H14.3" stroke="#7b3fe8" stroke-width="1.8" stroke-linecap="round"/></svg>
<div class="b" style="left:1273.1px;top:484.0px;width:30.0px;height:30.0px;background:#feeaf0;border-radius:6px"></div>
<svg class="b" style="left:1273.1px;top:484.0px" width="30" height="30" viewBox="0 0 30 30" fill="none"><path d="M5.8 8.6Q15 7.6 23.2 8.6M9.9 8.2V6.6Q9.9 4.3 12.2 4.3H16.9Q19.1 4.3 19.1 6.6V8.2M7.1 11.6L7.8 22.3Q8.1 24.9 10.6 24.9H18.4Q20.9 24.9 21.2 22.3L21.9 11.6M11.8 15.5H17.2M12.7 19.5H16.3" stroke="#f62a5e" stroke-width="1.7" stroke-linecap="round" stroke-linejoin="round"/></svg>
<div class="b" style="left:81.0px;top:127.0px;width:148.0px;height:26.0px;border:2px solid #ee0000;box-sizing:border-box;box-shadow:2px 3px 4px rgba(0,0,0,.3),inset 1.5px 1.5px 2.5px rgba(0,0,0,.22)"></div>
<div class="b" style="left:1232.3px;top:161.2px;width:37.7px;height:33.8px;border:2px solid #ee0000;box-sizing:border-box;box-shadow:2px 3px 4px rgba(0,0,0,.3),inset 1.5px 1.5px 2.5px rgba(0,0,0,.22)"></div>
<div class="b" style="left:1207.0px;top:119.0px;width:88.0px;height:39.0px;background:#1f2128;border-radius:7px"></div>
<svg class="b" style="left:1244.0px;top:157.0px" width="15" height="5" viewBox="0 0 15 5" fill="none"><path d="M0 0H15L7.5 4.5Z" fill="#1f2128"/></svg>
<div class="t" style="left:1220.6px;top:131.70px;font-size:13px;line-height:13px;font-weight:400;color:#ececee;letter-spacing:0px;transform:scaleX(1.0370);transform-origin:0 0;-webkit-text-stroke:0.3px #ececee;">View Files</div>
<div class="b" style="left:891.0px;top:73.0px;width:200.0px;height:172.0px;background:#fff;border-radius:9px 0 9px 9px;box-shadow:0 10px 45px rgba(30,40,60,.13)"></div>
<div class="t" style="left:911.0px;top:91.15px;font-size:14px;line-height:14px;font-weight:700;color:#1f2433;letter-spacing:0px;">Choose an action</div>
<svg class="b" style="left:910.0px;top:130.0px" width="26" height="26" viewBox="0 0 26 26" fill="none"><path d="M6.6 8.6Q13.7 7.9 21 8.6M10.6 8.2V7.5Q10.6 5.6 12.4 5.6H15.6Q17.4 5.6 17.4 7.5V8.2M8.4 10.9L9 18.6Q9.2 21 11.4 21H16.6Q18.8 21 19 18.6L19.6 10.9M12.1 13.9H15.6M12.9 17H15.5" stroke="#f43c70" stroke-width="1.45" stroke-linecap="round" stroke-linejoin="round"/></svg>
<div class="t" style="left:943.4px;top:137.00px;font-size:13px;line-height:13px;font-weight:400;color:#323d58;letter-spacing:0px;transform:scaleX(1.0804);transform-origin:0 0;-webkit-text-stroke:0.12px #323d58;">Delete</div>
<svg class="b" style="left:910.0px;top:170.0px" width="26" height="26" viewBox="0 0 26 26" fill="none"><path d="M16.2 4.25H10A4.5 4.5 0 0 0 5.55 8.75V16.45A4.5 4.5 0 0 0 10 20.95H17.65A4.5 4.5 0 0 0 22.15 16.45V9.9Z" stroke="#323d58" stroke-width="1.35" stroke-linejoin="round"/><path d="M16.2 4.4V6.6A3 3 0 0 0 19.2 9.6H22" stroke="#323d58" stroke-width="1.3"/><path d="M10.2 12.7V17.4M7.9 15.3L10.2 17.6L12.5 15.3" stroke="#323d58" stroke-width="1.3" stroke-linecap="round" stroke-linejoin="round"/></svg>
<div class="t" style="left:943.4px;top:177.20px;font-size:13px;line-height:13px;font-weight:400;color:#323d58;letter-spacing:0px;transform:scaleX(1.0840);transform-origin:0 0;-webkit-text-stroke:0.12px #323d58;">Download file</div>
<div class="b" style="left:900.0px;top:209.0px;width:124.0px;height:28.5px;border:2px solid #ee0000;box-sizing:border-box;box-shadow:2px 3px 4px rgba(0,0,0,.3),inset 1.5px 1.5px 2.5px rgba(0,0,0,.22)"></div>
<svg class="b" style="left:911.0px;top:211.0px" width="26" height="26" viewBox="0 0 26 26" fill="none"><path d="M13.9 21.05H10A4.75 4.75 0 0 1 5.25 16.3V10.5A4.75 4.75 0 0 1 10 5.75H15.8A4.75 4.75 0 0 1 20.55 10.5V14.4Z" stroke="#323d58" stroke-width="1.35" stroke-linejoin="round"/><path d="M20.4 14.4H17.5A3.6 3.6 0 0 0 13.9 18V20.9" stroke="#323d58" stroke-width="1.3"/><path d="M9.5 4.7V6.1M16.4 4.7V6.1M8.6 10.4H16.5M8.6 14.4H12.6" stroke="#323d58" stroke-width="1.3" stroke-linecap="round"/></svg>
<div class="t" style="left:943.7px;top:218.00px;font-size:13px;line-height:13px;font-weight:400;color:#323d58;letter-spacing:0px;transform:scaleX(1.0438);transform-origin:0 0;-webkit-text-stroke:0.12px #323d58;">View Files</div>
<div class="b" style="left:28.0px;top:535.0px;width:70.0px;height:43.0px;border:1px solid #d9dde8;border-radius:6px;box-sizing:border-box"></div>
<div class="t" style="left:42.2px;top:549.15px;font-size:14px;line-height:14px;font-weight:400;color:#3b4561;letter-spacing:0px;transform:scaleX(1.0014);transform-origin:0 0;">10</div>
<svg class="b" style="left:69.0px;top:551.0px" width="14" height="10" viewBox="0 0 14 10" fill="none"><path d="M2 2.5L7 7.5L12 2.5" stroke="#6d7488" stroke-width="1.3" stroke-linecap="round" stroke-linejoin="round"/></svg>
<div class="t" style="left:101.4px;top:549.00px;font-size:13px;line-height:13px;font-weight:400;color:#23283a;letter-spacing:0px;transform:scaleX(1.0425);transform-origin:0 0;-webkit-text-stroke:0.1px #23283a;">Showing 1 - 10 of 122 records</div>
<div class="b" style="left:1071.0px;top:534.0px;width:32.0px;height:32.0px;background:#2186f4;border-radius:50%"></div>
<div class="t" style="left:1067.0px;width:40px;text-align:center;top:542.95px;font-size:14px;line-height:14px;font-weight:400;color:#fff;-webkit-text-stroke:0.45px #fff">1</div>
<div class="t" style="left:1105.5px;width:40px;text-align:center;top:542.95px;font-size:14px;line-height:14px;font-weight:400;color:#3b4561;-webkit-text-stroke:0.2px #3b4561">2</div>
<div class="t" style="left:1144.9px;width:40px;text-align:center;top:542.95px;font-size:14px;line-height:14px;font-weight:400;color:#3b4561;-webkit-text-stroke:0.2px #3b4561">3</div>
<div class="t" style="left:1184.0px;width:40px;text-align:center;top:542.95px;font-size:14px;line-height:14px;font-weight:400;color:#3b4561;-webkit-text-stroke:0.2px #3b4561">4</div>
<div class="t" style="left:1222.7px;width:40px;text-align:center;top:542.95px;font-size:14px;line-height:14px;font-weight:400;color:#3b4561;-webkit-text-stroke:0.2px #3b4561">5</div>
<svg class="b" style="left:1040.0px;top:542.0px" width="16" height="16" viewBox="0 0 16 16" fill="none"><path d="M9.7 4L5.2 8.3L9.7 12.9" stroke="#b8c0d5" stroke-width="1.6" stroke-linecap="round" stroke-linejoin="round"/></svg>
<svg class="b" style="left:1274.0px;top:542.0px" width="16" height="16" viewBox="0 0 16 16" fill="none"><path d="M5.2 4L9.8 8.3L5.2 12.9" stroke="#3a4668" stroke-width="1.7" stroke-linecap="round" stroke-linejoin="round"/></svg>
<svg class="b" style="left:990.0px;top:540.0px" width="24" height="20" viewBox="0 0 24 20" fill="none"><path d="M18.9 5L13 11.1L18.9 17" stroke="#dfe3ee" stroke-width="1.8" stroke-linecap="round" stroke-linejoin="round"/><path d="M12.8 5L6.9 11.1L12.8 17" stroke="#b3bcd4" stroke-width="1.8" stroke-linecap="round" stroke-linejoin="round"/></svg>
<svg class="b" style="left:1314.0px;top:540.0px" width="24" height="20" viewBox="0 0 24 20" fill="none"><path d="M6 5L11.9 11.1L6 17" stroke="#a9b0c6" stroke-width="1.9" stroke-linecap="round" stroke-linejoin="round"/><path d="M12 5L17.9 11.1L12 17" stroke="#35416a" stroke-width="2.1" stroke-linecap="round" stroke-linejoin="round"/></svg>
</body></html>
